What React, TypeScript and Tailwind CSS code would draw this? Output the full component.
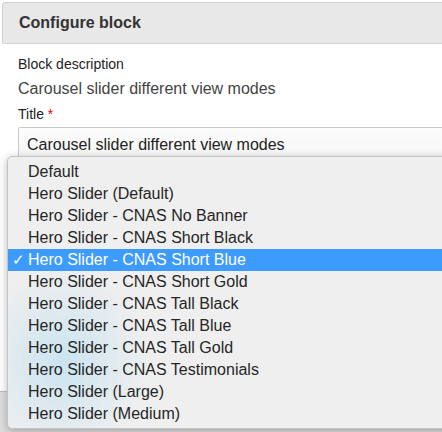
import React from 'react';

const viewModes = [
  'Default',
  'Hero Slider (Default)',
  'Hero Slider - CNAS No Banner',
  'Hero Slider - CNAS Short Black',
  'Hero Slider - CNAS Short Blue',
  'Hero Slider - CNAS Short Gold',
  'Hero Slider - CNAS Tall Black',
  'Hero Slider - CNAS Tall Blue',
  'Hero Slider - CNAS Tall Gold',
  'Hero Slider - CNAS Testimonials',
  'Hero Slider (Large)',
  'Hero Slider (Medium)',
];

const selected = 'Hero Slider - CNAS Short Blue';

const App: React.FC = () => {
  return (
    <div className="relative w-[442px] h-[432px] overflow-hidden bg-white font-['Liberation_Sans',Arial,sans-serif]">
      {/* Dialog title bar */}
      <div className="ml-[2px] mt-[2px] h-[42px] w-[460px] rounded-tl-[3px] border border-[#d3d3d3] bg-[#e8e8e8] pl-[16px] pt-[11px]">
        <h2 className="text-[16px] font-bold leading-[18px] text-[#333]">Configure block</h2>
      </div>

      {/* Form */}
      <div className="pl-[18px] pt-[12px]">
        <div className="text-[14px] leading-[16px] text-[#222]">Block description</div>
        <div className="mt-[8px] text-[16px] leading-[18px] text-[#444]">Carousel slider different view modes</div>
        <div className="mt-[8px] text-[14px] leading-[16px] text-[#222]">
          Title <span className="text-[#e00]">*</span>
        </div>
        <div className="mt-[5px] flex h-[31px] w-[460px] items-center rounded-l-[2px] border border-[#c8c8c8] bg-gradient-to-b from-[#fcfcfc] to-[#f6f6f6] pl-[8px] pt-[4px] text-[16px] text-[#222]">
          Carousel slider different view modes
        </div>
      </div>

      {/* Lower form area behind the menu */}
      <div className="mt-[233px] h-[60px] border-t border-[#bdbdbd] bg-[#dedede]" />

      {/* Native select menu */}
      <div className="absolute left-[7px] top-[156px] h-[273px] w-[450px] rounded-[5px] border border-[#c4c4c4] bg-[#efefef] py-[4px] shadow-[0_2px_8px_rgba(0,0,0,0.28)] overflow-hidden">
        <div className="pointer-events-none absolute left-[-30px] top-[110px] h-[190px] w-[170px] rounded-full bg-[radial-gradient(closest-side,rgba(196,226,240,0.85),rgba(239,239,239,0))]" />
        <ul className="relative">
          {viewModes.map(mode => {
            const active = mode === selected;
            return (
              <li
                key={mode}
                className={`flex h-[22px] items-center text-[16px] leading-[22px] ${active ? 'bg-[#3e9bfe] text-white' : 'text-[#262626]'}`}
              >
                <span className="w-[20px] pl-[4px] text-[15px]">{active ? '✓' : ''}</span>
                {mode}
              </li>
            );
          })}
        </ul>
      </div>
    </div>
  );
};

export default App;
